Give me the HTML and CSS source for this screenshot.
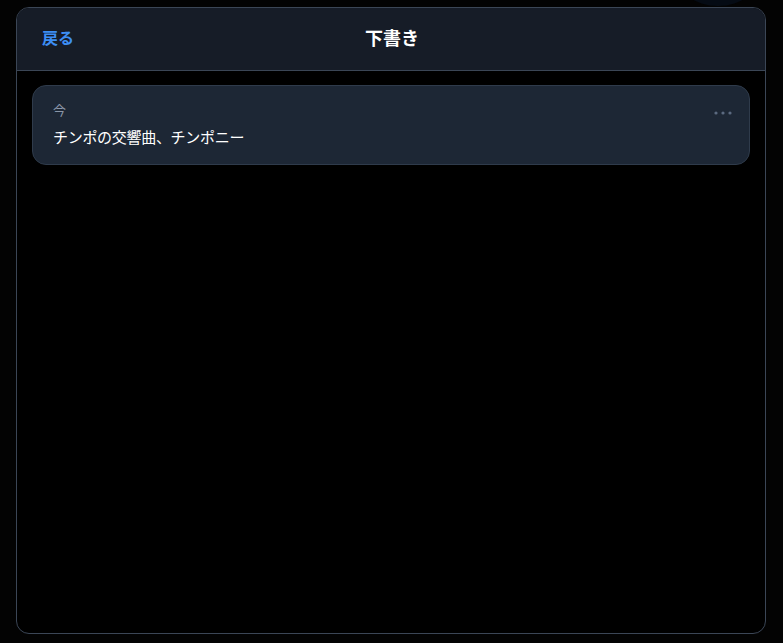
FILE: index.html
```html
<!DOCTYPE html>
<html lang="ja">
<head>
    <meta charset="UTF-8">
    <meta name="viewport" content="width=device-width, initial-scale=1.0">
    <title>下書き</title>
    <link rel="stylesheet" href="styles.css">
</head>
<body>
    <div class="glow"></div>
    <div class="panel">
        <div class="header">
            <button class="back">戻る</button>
            <h2>下書き</h2>
        </div>
        <div class="drafts">
            <div class="draft">
                <div class="time">今</div>
                <div class="text">チンポの交響曲、チンポニー</div>
                <button class="more" aria-label="more">
                    <svg width="18" height="4" viewBox="0 0 18 4"><circle cx="2" cy="2" r="1.6"/><circle cx="9" cy="2" r="1.6"/><circle cx="16" cy="2" r="1.6"/></svg>
                </button>
            </div>
        </div>
    </div>
</body>
</html>
```
FILE: styles.css
```css
html, body {
    height: 100%;
}
body {
    margin: 0;
    background: #030303;
    font-family: "Noto Sans CJK JP", "Noto Sans", sans-serif;
    padding: 7px 17px 9px 16px;
    box-sizing: border-box;
    position: relative;
    overflow: hidden;
}
.glow {
    position: absolute;
    top: -62px;
    right: 22px;
    width: 86px;
    height: 68px;
    border-radius: 50%;
    background: #050b14;
}
.panel {
    position: relative;
    height: 100%;
    border: 1px solid #3b4656;
    border-radius: 13px;
    background: #000;
    overflow: hidden;
    box-sizing: border-box;
}
.header {
    height: 62px;
    background: #161c27;
    border-bottom: 1px solid #3b4656;
    display: flex;
    align-items: center;
    justify-content: center;
    position: relative;
}
.header h2 {
    margin: 0 0 4px 2px;
    color: #fff;
    font-size: 18px;
    font-weight: bold;
}
.back {
    position: absolute;
    left: 25px;
    top: 50%;
    transform: translateY(-50%);
    margin-top: -2px;
    background: none;
    border: none;
    padding: 0;
    color: #3d8ef4;
    font-family: inherit;
    font-size: 16px;
    font-weight: bold;
    cursor: pointer;
}
.drafts {
    padding: 14px 15px;
}
.draft {
    position: relative;
    background: #1d2735;
    border: 1px solid #2f3b4b;
    border-radius: 14px;
    padding: 14px 20px 14px;
    height: 80px;
    box-sizing: border-box;
}
.time {
    color: #8a96a8;
    font-size: 13px;
    line-height: 20px;
}
.text {
    color: #fff;
    font-size: 15px;
    line-height: 22px;
    margin-top: 6px;
    letter-spacing: -0.3px;
}
.more {
    position: absolute;
    top: 25px;
    right: 17px;
    background: none;
    border: none;
    padding: 0;
    fill: #5b6a80;
    line-height: 0;
}
```
